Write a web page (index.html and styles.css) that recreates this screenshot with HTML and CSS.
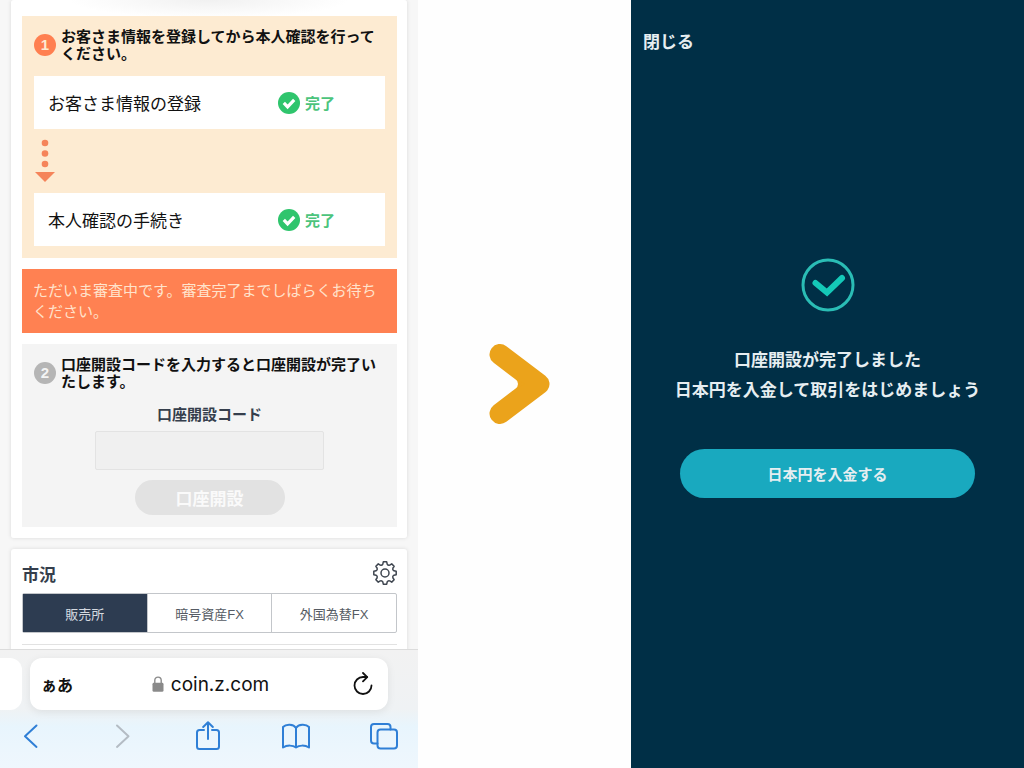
FILE: index.html
```html
<!DOCTYPE html>
<html lang="ja">
<head>
  <meta charset="UTF-8">
  <title>口座開設</title>
  <link rel="stylesheet" href="styles.css">
</head>
<body>
  <div class="browser">
    <main class="page">
      <div class="card first">
        <section class="step step1">
          <h2><span class="num">1</span><span>お客さま情報を登録してから本人確認を行ってください。</span></h2>
          <div class="row">
            <span>お客さま情報の登録</span>
            <span class="done">
              <svg width="22" height="22" viewBox="0 0 22 22"><circle cx="11" cy="11" r="11" fill="#2fc56d"/><path d="M5.8 10.800l3.8 4 6.600-7" fill="none" stroke="#fff" stroke-width="3.2"/></svg>完了
            </span>
          </div>
          <div class="next">
            <svg width="22" height="44" viewBox="0 0 22 44" fill="#f5845a"><circle cx="11" cy="4" r="3.300"/><circle cx="11" cy="14.500" r="3.300"/><circle cx="11" cy="25" r="3.300"/><path d="M1 33h20L11 43z"/></svg>
          </div>
          <div class="row">
            <span>本人確認の手続き</span>
            <span class="done">
              <svg width="22" height="22" viewBox="0 0 22 22"><circle cx="11" cy="11" r="11" fill="#2fc56d"/><path d="M5.8 10.800l3.8 4 6.600-7" fill="none" stroke="#fff" stroke-width="3.2"/></svg>完了
            </span>
          </div>
        </section>

        <p class="notice">ただいま審査中です。審査完了までしばらくお待ちください。</p>

        <section class="step step2">
          <h2><span class="num">2</span><span>口座開設コードを入力すると口座開設が完了いたします。</span></h2>
          <form>
            <label for="code">口座開設コード</label>
            <input type="text" id="code" disabled>
            <button type="submit" disabled>口座開設</button>
          </form>
        </section>
      </div>

      <div class="card market">
        <div class="market-head">
          <h2>市況</h2>
          <button type="button" aria-label="設定">
            <svg width="24" height="24" viewBox="-12 -12 24 24" fill="none" stroke="#3f4650" stroke-width="1.5" stroke-linejoin="round"><path d="M11.200-1.700V1.700L8.900 2.200A2.100 2.100 0 0 0 7.850 4.740L9.120 6.720 6.720 9.120 4.740 7.850A2.100 2.100 0 0 0 2.200 8.900L1.700 11.200H-1.700L-2.200 8.900A2.100 2.100 0 0 0-4.740 7.850L-6.720 9.120-9.120 6.720-7.850 4.740A2.100 2.100 0 0 0-8.900 2.200L-11.200 1.700V-1.700L-8.900-2.200A2.100 2.100 0 0 0-7.850-4.740L-9.120-6.720-6.720-9.120-4.740-7.850A2.100 2.100 0 0 0-2.200-8.900L-1.700-11.200H1.700L2.200-8.900A2.100 2.100 0 0 0 4.740-7.850L6.720-9.120 9.120-6.720 7.850-4.740A2.100 2.100 0 0 0 8.900-2.200Z"/><circle r="4"/></svg>
          </button>
        </div>
        <div class="tabs">
          <button type="button" class="active">販売所</button>
          <button type="button">暗号資産FX</button>
          <button type="button">外国為替FX</button>
        </div>
        <hr>
      </div>
    </main>

    <footer class="safari">
      <div class="address-row">
        <div class="prev-tab"></div>
        <div class="address">
          <button type="button" class="aa">ぁあ</button>
          <span class="url">
            <svg width="12" height="16" viewBox="0 0 12 16"><path d="M2.800 8V4.300a3.200 3.200 0 0 1 6.400 0V8" fill="none" stroke="#8a8a8a" stroke-width="1.4"/><rect x="0.5" y="6.800" width="11" height="9" rx="1.4" fill="#8a8a8a"/></svg>coin.z.com
          </span>
          <button type="button" class="reload" aria-label="再読み込み">
            <svg width="20" height="24" viewBox="0 0 20 24" fill="none" stroke="#111" stroke-width="1.8" stroke-linecap="round" stroke-linejoin="round"><path d="M18.500 13.500A8.500 8.500 0 1 1 10 5h4"/><path d="M10 1L14.200 5.200 10 9.400"/></svg>
          </button>
        </div>
      </div>
      <nav class="toolbar">
        <button type="button" aria-label="戻る"><svg width="28" height="30" viewBox="0 0 28 30"><path d="M19.500 4.500L8 15.200 19.500 25.900"/></svg></button>
        <button type="button" aria-label="進む" class="off"><svg width="28" height="30" viewBox="0 0 28 30"><path d="M12 4.500L23.500 15.200 12 25.900"/></svg></button>
        <button type="button" aria-label="共有"><svg width="28" height="30" viewBox="0 0 28 30"><path d="M10 9H5.500a2.500 2.500 0 0 0-2.500 2.500v14A2.500 2.500 0 0 0 5.500 28h17a2.500 2.500 0 0 0 2.500-2.500v-14A2.500 2.500 0 0 0 22.500 9H18"/><path d="M14 18V1.500M9.200 6L14 1.200 18.800 6"/></svg></button>
        <button type="button" aria-label="ブックマーク"><svg width="28" height="30" viewBox="0 0 28 30"><path d="M14 26.500V7C11.500 2.800 4 2.800 1 6v20.500c4-2.600 10-2.400 13 0 3-2.400 9-2.600 13 0V6C24 2.800 16.500 2.800 14 7"/></svg></button>
        <button type="button" aria-label="タブ"><svg width="28" height="30" viewBox="0 0 28 30"><rect x="7.500" y="8.500" width="19.500" height="19" rx="3"/><path d="M7.500 22.500H4a3 3 0 0 1-3-3V6a3 3 0 0 1 3-3h13.500a3 3 0 0 1 3 3v2.500"/></svg></button>
      </nav>
    </footer>
  </div>

  <div class="arrow">
    <svg width="62" height="82" viewBox="0 0 62 82"><path d="M11 11.500L50 41 11 70.500" fill="none" stroke="#eba31b" stroke-width="21" stroke-linecap="round" stroke-linejoin="round"/><path d="M26 35q6 6 0 12l10-6z" fill="#eba31b"/></svg>
  </div>

  <div class="finish">
    <button type="button" class="close">閉じる</button>
    <div class="message">
      <svg width="54" height="54" viewBox="0 0 54 54" fill="none" stroke="#14c9b8"><circle cx="27" cy="27" r="25" stroke="#2abdb5" stroke-width="3"/><path d="M14.500 25L26 34.500 41 20" stroke-width="6" stroke-linecap="round"/></svg>
      <p>口座開設が完了しました<br>日本円を入金して取引をはじめましょう</p>
      <button type="button" class="deposit">日本円を入金する</button>
    </div>
  </div>
</body>
</html>
```
FILE: styles.css
```css
* {
  box-sizing: border-box;
}
body {
  margin: 0;
  height: 100vh;
  display: grid;
  grid-template-columns: 418fr 213fr 393fr;
  background: #fefefe;
  color: #111;
  font-family: "Liberation Sans", "Noto Sans CJK JP", sans-serif;
}
h2, p {
  margin: 0;
}
button {
  border: none;
  background: none;
  padding: 0;
  color: inherit;
  font-family: inherit;
}
svg {
  display: block;
  flex: none;
}

/* 左のブラウザ画面 */
.browser {
  height: 100vh;
  display: flex;
  flex-direction: column;
  overflow: hidden;
  background: #f7f7f7;
}
.page {
  flex: 1;
  min-height: 0;
  overflow: hidden;
  padding: 0 11px;
}
.card {
  background: #fff;
  border-radius: 3px;
  padding: 11px 10px 11px 11px;
  box-shadow: 0 0 4px rgba(0,0,0,0.12);
}
.first {
  padding-top: 16px;
  background: radial-gradient(ellipse 140px 18px at 50% 0, #f1f1f1, #fff);
}
.step {
  padding: 12px;
}
.step1 {
  background: #fdebd2;
}
.step2 {
  background: #f4f4f4;
}
.step h2 {
  display: flex;
  align-items: center;
  gap: 5px;
  font-size: 15px;
  line-height: 17px;
}
.num {
  flex: none;
  width: 22px;
  height: 22px;
  border-radius: 50%;
  background: #ff7f50;
  color: #fdebd2;
  line-height: 22px;
  text-align: center;
}
.step2 .num {
  background: #b5b5b5;
  color: #f4f4f4;
}
.row {
  display: flex;
  align-items: center;
  justify-content: space-between;
  height: 53px;
  padding: 0 50px 0 14px;
  background: #fff;
  font-size: 17px;
}
.step1 h2 {
  margin-bottom: 14px;
}
.done {
  display: flex;
  align-items: center;
  gap: 5px;
  color: #4cc47c;
  font-size: 15px;
  font-weight: bold;
}
.next {
  height: 64px;
  padding-top: 10px;
}
.notice {
  margin: 11px 0;
  padding: 11px;
  background: #ff8152;
  color: #ffe3cc;
  font-size: 15px;
  line-height: 21px;
}
form {
  display: flex;
  flex-direction: column;
  align-items: center;
  padding-top: 13px;
}
form label {
  color: #353e4c;
  font-size: 15px;
  font-weight: bold;
  line-height: 24px;
}
form input {
  width: 65%;
  height: 39px;
  margin: 4px 0 10px;
  border: 1px solid #e3e3e3;
  border-radius: 2px;
  background: #f0f0f0;
}
form button {
  width: 150px;
  height: 35px;
  border-radius: 18px;
  background: #e2e2e2;
  color: #fafafa;
  font-size: 17px;
  font-weight: bold;
}
.market {
  margin-top: 11px;
  padding-top: 12px;
}
.market-head {
  display: flex;
  align-items: center;
  justify-content: space-between;
  height: 24px;
  margin-bottom: 8px;
}
.market h2 {
  color: #353e4c;
  font-size: 17px;
}
.tabs {
  display: flex;
  height: 40px;
  border: 1px solid #c3c6ca;
  border-radius: 2px;
}
.tabs button {
  flex: 1;
  color: #555b63;
  font-size: 13px;
}
.tabs button + button {
  border-left: 1px solid #c3c6ca;
}
.tabs .active {
  background: #2d3c51;
  color: #d5dae0;
}
hr {
  margin: 11px 0 0;
  border: none;
  border-top: 1px solid #e2e2e2;
}

/* Safariのバー */
.safari {
  position: relative;
  height: 119px;
  border-top: 1px solid #dcdcdc;
  background: linear-gradient(#f2f2f2, #eff2f4 50%, #e8f5fd 65%, #eff7fd);
}
.address-row {
  display: flex;
  gap: 8px;
  height: 61px;
  padding: 8px 30px 0 0;
}
.prev-tab {
  width: 22px;
  height: 52px;
  border-radius: 0 12px 12px 0;
  background: #fff;
}
.address {
  flex: 1;
  display: flex;
  align-items: center;
  justify-content: space-between;
  height: 52px;
  padding: 0 15px 0 11px;
  border-radius: 12px;
  background: #fff;
  box-shadow: 0 2px 8px rgba(0,0,0,0.08);
}
.aa {
  font-size: 16px;
  font-weight: bold;
}
.url {
  display: flex;
  align-items: center;
  gap: 7px;
  margin-right: 5px;
  font-family: Inter, "Liberation Sans", sans-serif;
  font-size: 19px;
}
.toolbar {
  display: flex;
  justify-content: space-between;
  padding: 10px 20px 0 17px;
}
.toolbar svg {
  fill: none;
  stroke: #2f7fd6;
  stroke-width: 2;
  stroke-linecap: round;
  stroke-linejoin: round;
}
.toolbar .off svg {
  stroke: #b4bcc4;
}

.arrow {
  display: flex;
  align-items: center;
  justify-content: center;
  padding-right: 10px;
}

/* 右の完了画面 */
.finish {
  display: flex;
  flex-direction: column;
  align-items: flex-start;
  padding: 30px 12px 0;
  background: #002f46;
  color: #e6eef1;
}
.close {
  font-size: 17px;
  font-weight: bold;
  line-height: 26px;
}
.message {
  align-self: stretch;
  display: flex;
  flex-direction: column;
  align-items: center;
  margin-top: 202px;
}
.message p {
  margin: 34px 0 43px;
  font-size: 17px;
  font-weight: bold;
  line-height: 30px;
  text-align: center;
}
.deposit {
  width: 80%;
  height: 49px;
  border-radius: 25px;
  background: #19a9bf;
  font-size: 15px;
  font-weight: bold;
}
```
